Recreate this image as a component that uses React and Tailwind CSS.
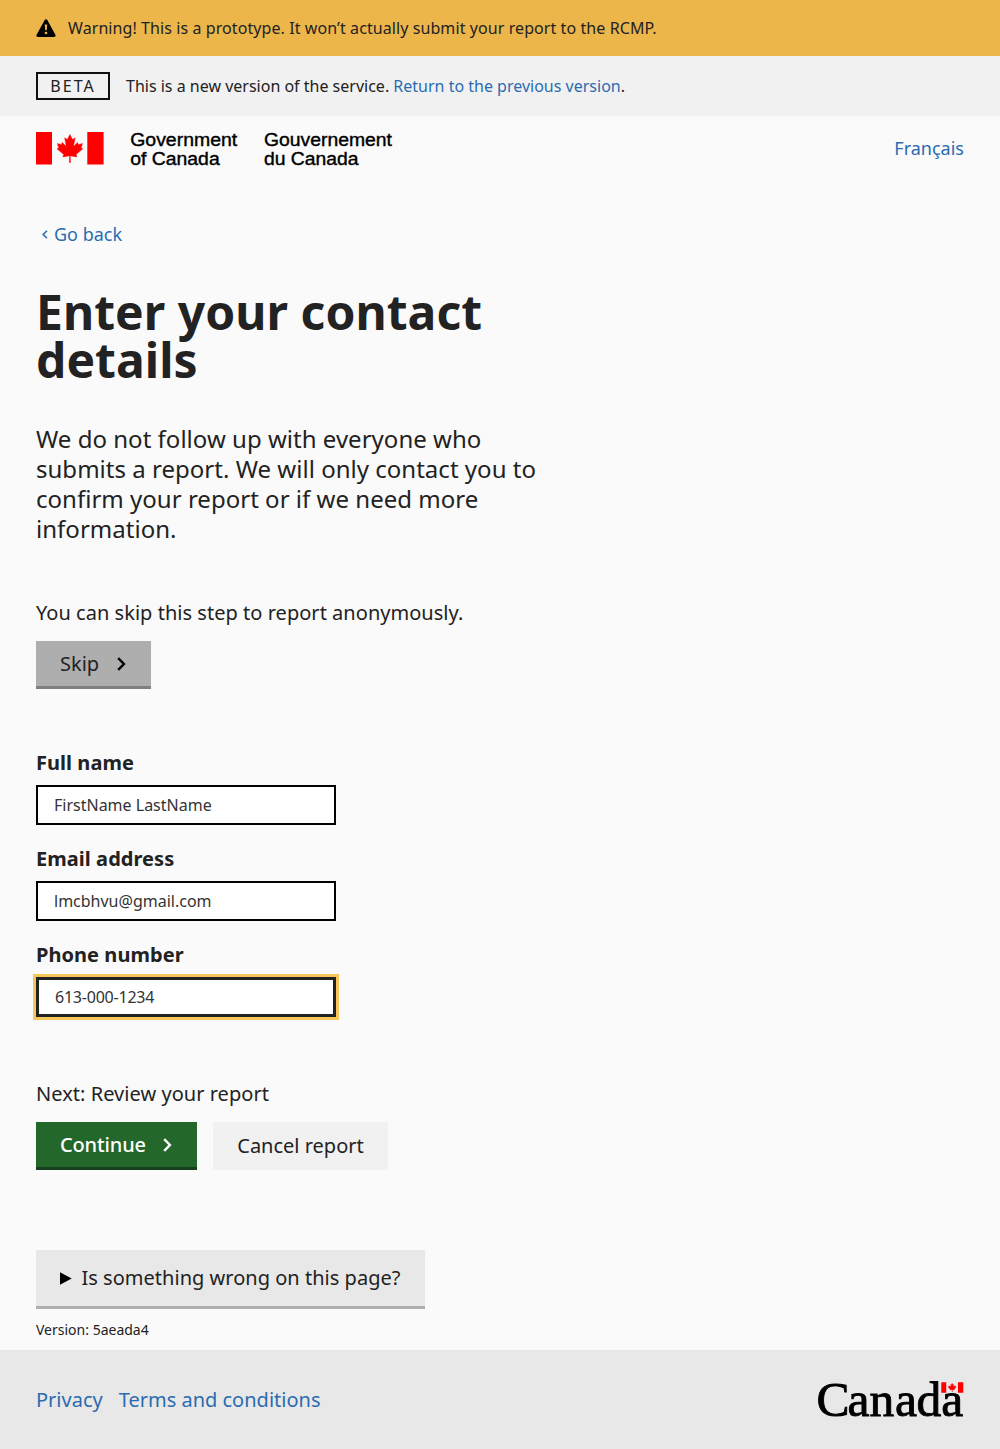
import React from 'react'

const LEAF =
  'm4890 4430-45-863a95 95 0 0 1 111-98l859 151-116-320a65 65 0 0 1 20-73l941-762-212-99a65 65 0 0 1-34-79l186-572-542 115a65 65 0 0 1-73-38l-105-247-423 454a65 65 0 0 1-111-57l204-1052-327 189a65 65 0 0 1-91-27l-332-652-332 652a65 65 0 0 1-91 27l-327-189 204 1052a65 65 0 0 1-111 57l-423-454-105 247a65 65 0 0 1-73 38l-542-115 186 572a65 65 0 0 1-34 79l-212 99 941 762a65 65 0 0 1 20 73l-116 320 859-151a95 95 0 0 1 111 98l-45 863z'

function GovernmentLogo() {
  return (
    <svg width="358" height="36" viewBox="0 0 358 36" className="block overflow-visible" role="img" aria-label="Government of Canada">
      <path d="M0 0h16v32.5H0zM51.3 0h16.3v32.5H51.3z" fill="#f00" />
      <path d={LEAF} fill="#f00" stroke="#f00" strokeWidth="60" transform="translate(.3 -.4) scale(.007)" />
      <g
        fontFamily="'Liberation Sans', Arial, sans-serif"
        fontSize="18.9"
        stroke="#000"
        strokeWidth=".4"
        fill="#000"
      >
        <text x="94.2" y="14" textLength="107" lengthAdjust="spacingAndGlyphs">Government</text>
        <text x="94.2" y="32.6" textLength="89.5" lengthAdjust="spacingAndGlyphs">of Canada</text>
        <text x="228" y="14" textLength="128" lengthAdjust="spacingAndGlyphs">Gouvernement</text>
        <text x="228" y="32.6" textLength="94.5" lengthAdjust="spacingAndGlyphs">du Canada</text>
      </g>
    </svg>
  )
}

function CanadaWordmark() {
  return (
    <svg width="148" height="38" viewBox="0 0 148 38" className="block overflow-visible" role="img" aria-label="Canada">
      <text
        x="0.500 31.500 53.500 79 100.500 125.300"
        y="35"
        fontFamily="'Liberation Serif', 'Times New Roman', serif"
        fontSize="49.500"
        stroke="#000"
        strokeWidth=".9"
      >
        Canada
      </text>
      <path d="M125.300 1.200h5.200v10.600h-5.200zM142 1.200h5.300v10.600H142z" fill="#f00" />
      <path d="M130.500 1.200H142v10.600h-11.500z" fill="#e8e8e8" />
      <path d={LEAF} fill="#f00" stroke="#f00" strokeWidth="130" transform="translate(126.100 1.400) scale(.0021)" />
    </svg>
  )
}

function Chevron({ className }) {
  return (
    <svg width="9" height="14" viewBox="0 0 9 14" className={className} fill="none" stroke="currentColor" strokeWidth="2.400">
      <path d="M1.200 1.200 6.900 7l-5.700 5.800" />
    </svg>
  )
}

function Field({ label, value, focused }) {
  return (
    <label className="mb-4 flex h-20 flex-col">
      <span className="mb-2 h-8 pt-0.5 text-xl leading-8 font-bold tracking-[0.05px]">{label}</span>
      <input
        defaultValue={value}
        className={
          focused
            ? 'h-10 w-[300px] border-[3px] border-[#222] bg-white px-4 text-base tracking-[-0.22px] text-[#333] outline-[3px] outline-[#f7c65b]'
            : 'h-10 w-[300px] border-2 border-black bg-white px-4 text-base text-[#333] outline-none'
        }
      />
    </label>
  )
}

export default function App() {
  return (
    <div className="flex h-[1449px] flex-col bg-[#fafafa] font-['Noto_Sans',sans-serif] text-[#222]">
      <div className="flex h-14 items-center bg-[#ecb64b] px-9 text-base">
        <svg width="20" height="18" viewBox="0 0 20 18" className="mr-3">
          <path d="M8.700 1a1.500 1.500 0 0 1 2.600 0l8.100 14.700a1.500 1.500 0 0 1-1.300 2.300H1.900a1.500 1.500 0 0 1-1.300-2.300z" fill="#000" />
          <path d="M8.800 5.500h2.400l-.4 5.700H9.200z" fill="#ecb64b" />
          <circle cx="10" cy="14" r="1.350" fill="#ecb64b" />
        </svg>
        <span className="tracking-[0.085px]">Warning! This is a prototype. It won’t actually submit your report to the RCMP.</span>
      </div>

      <div className="flex h-[60px] items-center bg-[#f1f1f1] px-9 text-base">
        <span className="mr-4 flex h-7 w-[74px] items-center justify-center border-2 border-[#111] tracking-[2px]">BETA</span>
        <span>
          This is a new version of the service. <a className="text-[#2b6cb0]">Return to the previous version</a>.
        </span>
      </div>

      <header className="flex h-[94px] items-start justify-between px-9 pt-4">
        <GovernmentLogo />
        <a className="text-lg leading-8 text-[#2b6cb0]">Français</a>
      </header>

      <main className="flex flex-1 flex-col items-start px-9">
        <a className="flex h-12 items-center pl-1.5 text-lg text-[#2b6cb0]">
          <svg width="6" height="9" viewBox="0 0 6 9" className="mt-px mr-1.5" fill="none" stroke="currentColor" strokeWidth="1.600">
            <path d="M5 .7 1.200 4.500 5 8.300" />
          </svg>
          Go back
        </a>

        <h1 className="mt-[30px] w-[504px] text-5xl leading-none font-bold tracking-[0.05px]">Enter your contact details</h1>

        <p className="mt-10 w-[504px] text-2xl leading-[30px] tracking-[0.02px]">
          We do not follow up with everyone who submits a report. We will only contact you to confirm your report or if we need more information.
        </p>

        <p className="mt-[54px] text-xl leading-[30px] tracking-[0.03px]">You can skip this step to report anonymously.</p>
        <button className="mt-[13px] flex h-12 w-[115px] items-center border-b-[3px] border-[#808080] bg-[#aeaeae] pl-6 text-xl">
          Skip
          <Chevron className="ml-[18px] text-black" />
        </button>

        <form className="mt-14 flex flex-col">
          <Field label="Full name" value="FirstName LastName" />
          <Field label="Email address" value="lmcbhvu@gmail.com" />
          <Field label="Phone number" value="613-000-1234" focused />
        </form>

        <p className="mt-[46px] text-xl leading-[30px] tracking-[0.04px]">Next: Review your report</p>
        <div className="mt-[13px] flex gap-4">
          <button className="flex h-12 w-[161px] items-center border-b-[3px] border-[#173f1f] bg-[#24672b] pl-6 text-xl font-medium tracking-[-0.15px] text-white">
            Continue
            <Chevron className="ml-[17px]" />
          </button>
          <button className="h-12 w-[175px] bg-[#f1f1f1] text-xl">Cancel report</button>
        </div>

        <div className="mt-20 flex h-[59px] w-[389px] items-center border-b-[3px] border-[#aeaeae] bg-[#e8e8e8] pl-6 text-xl tracking-[0.02px]">
          <svg width="12" height="13" viewBox="0 0 12 13" className="mr-[9.5px]">
            <path d="M0 .3v12.400l11.700-6.200z" />
          </svg>
          Is something wrong on this page?
        </div>
        <p className="mt-[10px] text-sm leading-[21px]">Version: 5aeada4</p>
      </main>

      <footer className="flex h-[99px] items-center justify-between bg-[#e8e8e8] px-9">
        <nav className="flex gap-4 text-xl text-[#2b6cb0]">
          <a>Privacy</a>
          <a>Terms and conditions</a>
        </nav>
        <CanadaWordmark />
      </footer>
    </div>
  )
}
